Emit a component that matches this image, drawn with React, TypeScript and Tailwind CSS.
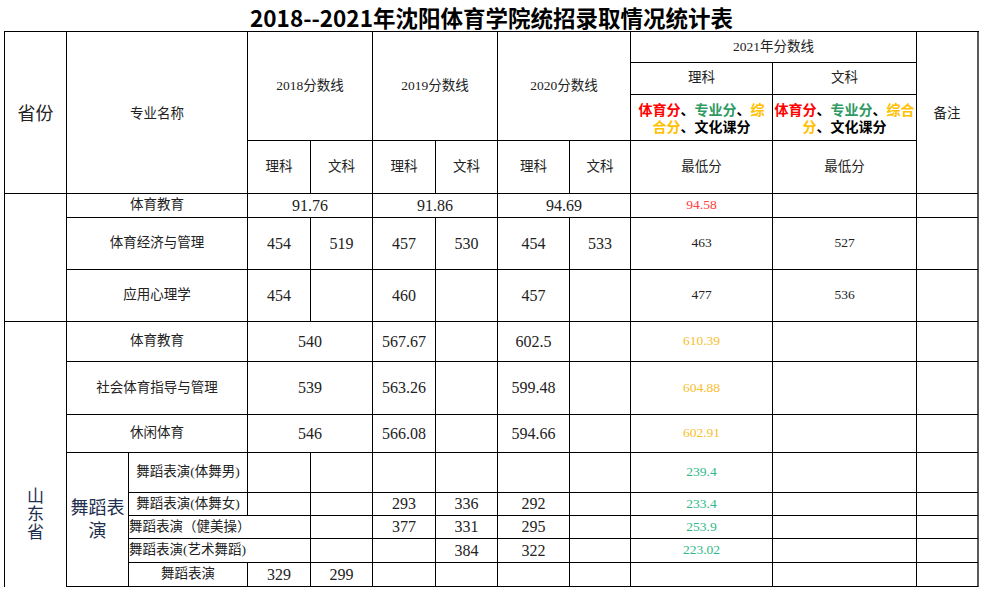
import React from "react";

const CS = ["", "col-start-1", "col-start-2", "col-start-3", "col-start-4", "col-start-5", "col-start-6", "col-start-7", "col-start-8", "col-start-9", "col-start-10", "col-start-11", "col-start-12"];
const CE = ["", "", "col-end-2", "col-end-3", "col-end-4", "col-end-5", "col-end-6", "col-end-7", "col-end-8", "col-end-9", "col-end-10", "col-end-11", "col-end-12", "col-end-13"];
const RS = ["", "row-start-1", "row-start-2", "row-start-3", "row-start-4", "row-start-5", "row-start-6", "row-start-7", "row-start-8", "row-start-9", "row-start-10", "row-start-11", "row-start-12", "row-start-13", "row-start-14", "row-start-15"];
const RE = ["", "", "row-end-2", "row-end-3", "row-end-4", "row-end-5", "row-end-6", "row-end-7", "row-end-8", "row-end-9", "row-end-10", "row-end-11", "row-end-12", "row-end-13", "row-end-14", "row-end-15", "row-end-16"];

type CellProps = {
  c: number;
  cs?: number;
  r: number;
  rs?: number;
  children?: React.ReactNode;
  className?: string;
};

function Cell({ c, cs = 1, r, rs = 1, children, className = "" }: CellProps) {
  const last = c + cs - 1 === 12;
  return (
    <div
      className={[
        CS[c],
        CE[c + cs],
        RS[r],
        RE[r + rs],
        "flex items-center justify-center text-center border-b border-black overflow-hidden",
        last ? "border-r-2 border-r-[#5a5a5a]" : "border-r",
        className,
      ].join(" ")}
    >
      {children}
    </div>
  );
}

const numCls = "text-[16px]";
const smCls = "text-[13.5px]";

function NumRow({
  r,
  name,
  vals,
}: {
  r: number;
  name: string;
  vals: [string, string, string, string, string, string, React.ReactNode, React.ReactNode];
}) {
  return (
    <>
      <Cell c={2} cs={2} r={r}>{name}</Cell>
      <Cell c={4} r={r} className={numCls}>{vals[0]}</Cell>
      <Cell c={5} r={r} className={numCls}>{vals[1]}</Cell>
      <Cell c={6} r={r} className={numCls}>{vals[2]}</Cell>
      <Cell c={7} r={r} className={numCls}>{vals[3]}</Cell>
      <Cell c={8} r={r} className={numCls}>{vals[4]}</Cell>
      <Cell c={9} r={r} className={numCls}>{vals[5]}</Cell>
      <Cell c={10} r={r} className={smCls}>{vals[6]}</Cell>
      <Cell c={11} r={r} className={smCls}>{vals[7]}</Cell>
      <Cell c={12} r={r} />
    </>
  );
}

function MergedRow({
  r,
  name,
  a,
  b,
  d,
  gold,
}: {
  r: number;
  name: string;
  a: string;
  b: string;
  d: string;
  gold: string;
}) {
  return (
    <>
      <Cell c={2} cs={2} r={r}>{name}</Cell>
      <Cell c={4} cs={2} r={r} className={numCls}>{a}</Cell>
      <Cell c={6} r={r} className={numCls}>{b}</Cell>
      <Cell c={7} r={r} />
      <Cell c={8} r={r} className={numCls}>{d}</Cell>
      <Cell c={9} r={r} />
      <Cell c={10} r={r} className={`${smCls} text-[#f7bd2c]`}>{gold}</Cell>
      <Cell c={11} r={r} />
      <Cell c={12} r={r} />
    </>
  );
}

function Colored({ split }: { split: boolean }) {
  const red = "text-[#ff0000]";
  const green = "text-[#2f9a63]";
  const yellow = "text-[#ffc000]";
  const black = "text-black";
  return (
    <div className="font-bold text-[14px] leading-[17px] font-['Noto_Sans_CJK_SC',sans-serif]">
      <div className="whitespace-nowrap">
        <span className={red}>体育分</span>
        <span className={black}>、</span>
        <span className={green}>专业分</span>
        <span className={black}>、</span>
        <span className={yellow}>{split ? "综" : "综合"}</span>
      </div>
      <div className="whitespace-nowrap">
        <span className={yellow}>{split ? "合分" : "分"}</span>
        <span className={black}>、文化课分</span>
      </div>
    </div>
  );
}

function Dance({ r, label, vals, green, wide }: { r: number; label: string; vals: string[]; green: string; wide?: boolean }) {
  const start = wide ? 5 : 4;
  return (
    <>
      {wide ? (
        <Cell c={3} cs={2} r={r} className="!justify-start whitespace-nowrap">{label}</Cell>
      ) : (
        <Cell c={3} r={r} className="whitespace-nowrap">{label}</Cell>
      )}
      {vals.map((v, i) => (
        <Cell key={i} c={start + i} r={r} className={numCls}>{v}</Cell>
      ))}
      <Cell c={10} r={r} className={`${smCls} text-[#2dba86]`}>{green}</Cell>
      <Cell c={11} r={r} />
      <Cell c={12} r={r} />
    </>
  );
}

export default function App() {
  return (
    <div className="w-[986px] h-[594px] overflow-hidden bg-white text-[#222] font-['Liberation_Serif','Noto_Sans_CJK_SC',serif] text-[13.5px]">
      <div className="ml-[4px] w-[975px] h-[31px] text-center text-[22.5px] leading-[34px] font-bold text-black font-['Noto_Sans_CJK_SC',sans-serif]">
        2018--2021年沈阳体育学院统招录取情况统计表
      </div>
      <div className="ml-[4px] w-fit grid grid-cols-[62px_62px_119px_63px_62px_63px_62px_72px_61px_142px_144px_62px] grid-rows-[31px_32px_46px_53px_24px_52px_52px_40px_53px_38px_40px_23px_23px_24px_24px] border-l border-t border-black">
        {/* header */}
        <Cell c={1} r={1} rs={4} className="text-[18px] pt-[3px]">省份</Cell>
        <Cell c={2} cs={2} r={1} rs={4} className="pt-[3px]">专业名称</Cell>
        <Cell c={4} cs={2} r={1} rs={3}>2018分数线</Cell>
        <Cell c={6} cs={2} r={1} rs={3}>2019分数线</Cell>
        <Cell c={8} cs={2} r={1} rs={3}>2020分数线</Cell>
        <Cell c={10} cs={2} r={1}>2021年分数线</Cell>
        <Cell c={12} r={1} rs={4} className="pt-[3px]">备注</Cell>
        <Cell c={10} r={2}>理科</Cell>
        <Cell c={11} r={2}>文科</Cell>
        <Cell c={10} r={3}><Colored split={true} /></Cell>
        <Cell c={11} r={3}><Colored split={false} /></Cell>
        <Cell c={4} r={4}>理科</Cell>
        <Cell c={5} r={4}>文科</Cell>
        <Cell c={6} r={4}>理科</Cell>
        <Cell c={7} r={4}>文科</Cell>
        <Cell c={8} r={4}>理科</Cell>
        <Cell c={9} r={4}>文科</Cell>
        <Cell c={10} r={4}>最低分</Cell>
        <Cell c={11} r={4}>最低分</Cell>

        {/* group 1 */}
        <Cell c={1} r={5} rs={3} />
        <Cell c={2} cs={2} r={5}>体育教育</Cell>
        <Cell c={4} cs={2} r={5} className={numCls}>91.76</Cell>
        <Cell c={6} cs={2} r={5} className={numCls}>91.86</Cell>
        <Cell c={8} cs={2} r={5} className={numCls}>94.69</Cell>
        <Cell c={10} r={5} className={`${smCls} text-[#ff3b3b]`}>94.58</Cell>
        <Cell c={11} r={5} />
        <Cell c={12} r={5} />
        <NumRow r={6} name="体育经济与管理" vals={["454", "519", "457", "530", "454", "533", "463", "527"]} />
        <NumRow r={7} name="应用心理学" vals={["454", "", "460", "", "457", "", "477", "536"]} />

        {/* group 2 */}
        <Cell c={1} r={8} rs={8} className="!items-start !border-b-0">
          <div className="pt-[166px] w-[18px] text-[17px] leading-[18px] text-[#1e2f4f]">
            <div>山</div>
            <div>东</div>
            <div>省</div>
          </div>
        </Cell>
        <MergedRow r={8} name="体育教育" a="540" b="567.67" d="602.5" gold="610.39" />
        <MergedRow r={9} name="社会体育指导与管理" a="539" b="563.26" d="599.48" gold="604.88" />
        <MergedRow r={10} name="休闲体育" a="546" b="566.08" d="594.66" gold="602.91" />

        <Cell c={2} r={11} rs={5} className="text-[18px] leading-[23px] text-[#1e2f4f]">
          <div className="w-[56px]">舞蹈表演</div>
        </Cell>
        <Dance r={11} label="舞蹈表演(体舞男)" vals={["", "", "", "", "", ""]} green="239.4" />
        <Dance r={12} label="舞蹈表演(体舞女)" vals={["", "", "293", "336", "292", ""]} green="233.4" />
        <Dance r={13} label="舞蹈表演（健美操）" vals={["", "377", "331", "295", ""]} green="253.9" wide />
        <Dance r={14} label="舞蹈表演(艺术舞蹈)" vals={["", "", "384", "322", ""]} green="223.02" wide />
        <Cell c={3} r={15}>舞蹈表演</Cell>
        <Cell c={4} r={15} className={numCls}>329</Cell>
        <Cell c={5} r={15} className={numCls}>299</Cell>
        <Cell c={6} r={15} />
        <Cell c={7} r={15} />
        <Cell c={8} r={15} />
        <Cell c={9} r={15} />
        <Cell c={10} r={15} />
        <Cell c={11} r={15} />
        <Cell c={12} r={15} />
      </div>
    </div>
  );
}
